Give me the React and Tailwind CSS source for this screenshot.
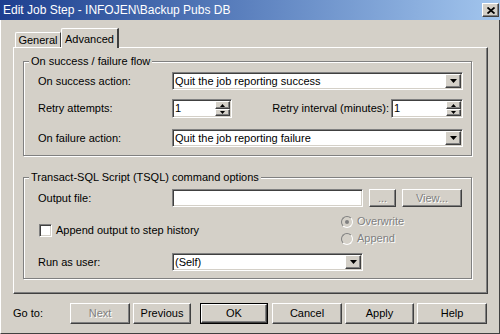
const font = "font-['Liberation_Sans',Arial,sans-serif]";

const sunken =
  'border border-t-[#808080] border-l-[#808080] border-b-white border-r-white shadow-[inset_1px_1px_0_#404040,inset_-1px_-1px_0_#d4d0c8]';
const raised =
  'border border-t-white border-l-white border-b-[#404040] border-r-[#404040] shadow-[inset_-1px_-1px_0_#808080]';

const DownArrow = ({ w = 7, h = 4 }) => (
  <svg width={w} height={h} viewBox={`0 0 ${w} ${h}`}>
    <polygon points={`0,0 ${w},0 ${w / 2},${h}`} fill="#000" />
  </svg>
);

const UpArrow = ({ w = 5, h = 3 }) => (
  <svg width={w} height={h} viewBox={`0 0 ${w} ${h}`}>
    <polygon points={`0,${h} ${w},${h} ${w / 2},0`} fill="#000" />
  </svg>
);

const Select = ({ value, className = '' }) => (
  <div className={`${sunken} bg-white flex items-center h-[18px] ${className}`}>
    <span className="flex-1 pl-[2px] text-black leading-none">{value}</span>
    <div className={`${raised} bg-[#d4d0c8] w-[16px] h-[14px] mr-[1px] flex items-center justify-center`}>
      <DownArrow />
    </div>
  </div>
);

const Spin = ({ value, className = '' }) => (
  <div className={`${sunken} bg-white flex items-center h-[19px] ${className}`}>
    <span className="flex-1 pl-[2px] leading-none">{value}</span>
    <div className="flex flex-col w-[15px] h-[15px] mr-[1px]">
      <div className={`${raised} bg-[#d4d0c8] h-[8px] flex items-center justify-center`}>
        <UpArrow />
      </div>
      <div className={`${raised} bg-[#d4d0c8] h-[7px] flex items-center justify-center`}>
        <DownArrow w={5} h={3} />
      </div>
    </div>
  </div>
);

const Button = ({ label, disabled, className = '' }) => (
  <div
    className={`${raised} bg-[#d4d0c8] flex items-center justify-center ${className} ${
      disabled ? 'text-[#808080] [text-shadow:1px_1px_0_#fff]' : 'text-black'
    }`}
  >
    {label}
  </div>
);

const Group = ({ title, className = '', children }) => (
  <fieldset
    className={`border border-[#808080] shadow-[inset_1px_1px_0_#fff,1px_1px_0_#fff] ${className}`}
  >
    <legend className="ml-[5px] px-[2px] leading-[13px] bg-[#d4d0c8]">{title}</legend>
    {children}
  </fieldset>
);

const Radio = ({ label, checked }) => (
  <div className="flex items-center h-[17px] text-[#808080] [text-shadow:1px_1px_0_#fff]">
    <div className="w-[12px] h-[12px] rounded-full border border-t-[#808080] border-l-[#808080] border-b-white border-r-white bg-[#d4d0c8] flex items-center justify-center">
      {checked && <div className="w-[4px] h-[4px] rounded-full bg-[#808080]" />}
    </div>
    <span className="ml-[4px]">{label}</span>
  </div>
);

export default function App() {
  return (
    <div className={`${font} text-[11px] text-black w-[500px] h-[334px] flex flex-col bg-[#d4d0c8] overflow-hidden`}>
      {/* title bar */}
      <div className="h-[20px] flex items-center justify-between bg-linear-to-r from-[#1e3f8f] to-[#a3c6ee] pl-[3px] pr-[1px]">
        <span className="text-white text-[12px] leading-none">
          Edit Job Step - INFOJEN\Backup Pubs DB
        </span>
        <div className={`${raised} bg-[#d4d0c8] w-[17px] h-[14px] flex items-center justify-center`}>
          <svg width="8" height="7" viewBox="0 0 8 7">
            <path d="M0.5 0.5 L7.5 6.5 M7.5 0.5 L0.5 6.5" stroke="#000" strokeWidth="1.8" />
          </svg>
        </div>
      </div>

      {/* body */}
      <div className="flex-1 flex flex-col border-l border-l-white border-r border-r-[#404040] border-b border-b-[#404040] pt-[8px] pl-[12px] pr-[11px]">
        {/* tabs */}
        <div className="flex items-end h-[19px]">
          <div className="ml-[2px] w-[46px] h-[15px] border-t border-l border-white border-r border-r-[#404040] rounded-tl-[2px] flex items-center justify-center">
            General
          </div>
          <div className="relative z-10 -mb-px w-[58px] h-[20px] bg-[#d4d0c8] border-t border-l border-white border-r-2 border-r-[#404040] rounded-tl-[2px] flex items-start justify-center pt-[2px]">
            Advanced
          </div>
        </div>

        {/* tab panel */}
        <div className="h-[247px] flex flex-col border border-t-white border-l-white border-b-[#404040] border-r-[#404040] shadow-[inset_-1px_-1px_0_#808080]">
          <Group title="On success / failure flow" className="mt-[7px] ml-[9px] mr-[15px]">
            <div className="pt-[4px] pb-[8px] pl-[14px] pr-[8px] flex flex-col">
              <div className="flex items-center h-[18px]">
                <span className="w-[134px]">On success action:</span>
                <Select value="Quit the job reporting success" className="flex-1" />
              </div>
              <div className="flex items-center h-[19px] mt-[9px]">
                <span className="w-[134px]">Retry attempts:</span>
                <Spin value="1" className="w-[60px]" />
                <span className="flex-1 text-right pr-[2px]">Retry interval (minutes):</span>
                <Spin value="1" className="w-[72px]" />
              </div>
              <div className="flex items-center h-[18px] mt-[11px]">
                <span className="w-[134px]">On failure action:</span>
                <Select value="Quit the job reporting failure" className="flex-1" />
              </div>
            </div>
          </Group>

          <Group title="Transact-SQL Script (TSQL) command options" className="mt-[15px] ml-[9px] mr-[15px]">
            <div className="pt-[5px] pb-[7px] pl-[14px] pr-[8px] flex flex-col">
              <div className="flex items-center h-[18px]">
                <span className="w-[134px]">Output file:</span>
                <div className={`${sunken} bg-white w-[191px] h-[18px]`} />
                <Button label="..." disabled className="ml-[6px] w-[27px] h-[18px]" />
                <Button label="View..." disabled className="ml-[6px] w-[60px] h-[18px]" />
              </div>
              <div className="flex items-center h-[46px]">
                <div className="w-[303px] flex items-center">
                  <div className={`${sunken} bg-white w-[13px] h-[13px] ml-[1px]`} />
                  <span className="ml-[4px]">Append output to step history</span>
                </div>
                <div className="flex flex-col">
                  <Radio label="Overwrite" checked />
                  <Radio label="Append" />
                </div>
              </div>
              <div className="flex items-center h-[18px]">
                <span className="w-[134px]">Run as user:</span>
                <Select value="(Self)" className="w-[191px]" />
              </div>
            </div>
          </Group>
        </div>

        {/* footer */}
        <div className="flex items-center h-[21px] mt-[9px]">
          <span className="w-[57px]">Go to:</span>
          <Button label="Next" disabled className="w-[60px] h-[21px]" />
          <Button label="Previous" className="ml-[3px] w-[58px] h-[21px]" />
          <div className="ml-[9px] border border-black">
            <Button label="OK" className="w-[66px] h-[19px]" />
          </div>
          <Button label="Cancel" className="ml-[4px] w-[70px] h-[21px]" />
          <Button label="Apply" className="ml-[3px] w-[69px] h-[21px]" />
          <Button label="Help" className="ml-[3px] w-[70px] h-[21px]" />
        </div>
      </div>
    </div>
  );
}
